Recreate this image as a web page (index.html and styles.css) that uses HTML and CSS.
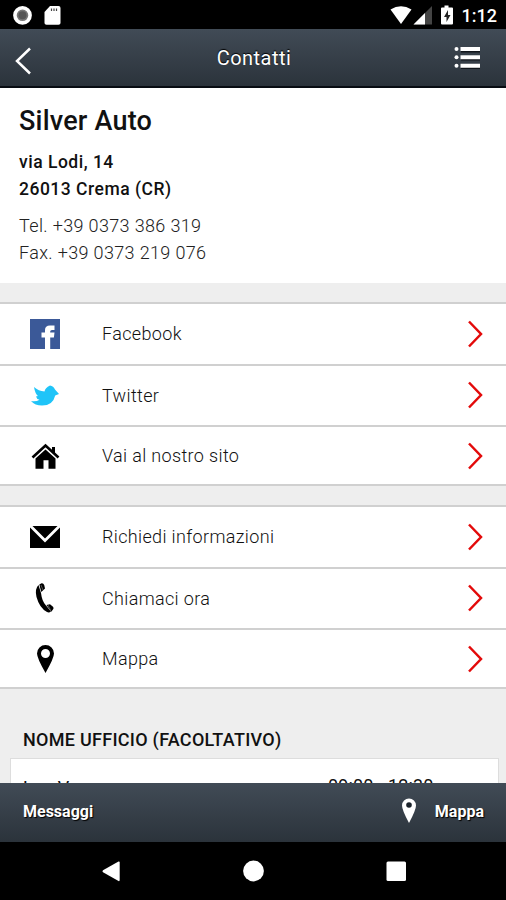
FILE: index.html
```html
<!DOCTYPE html>
<html lang="it">
<head>
  <meta charset="UTF-8">
  <meta name="viewport" content="width=device-width, initial-scale=1.0">
  <title>Contatti</title>
  <link rel="stylesheet" href="styles.css">
</head>
<body>

  <div class="status-bar">
    <svg class="status-left" width="50" height="22" viewBox="0 0 50 22">
      <circle cx="10.500" cy="11.300" r="7.600" fill="#777" stroke="#fff" stroke-width="3.600"/>
      <circle cx="10.500" cy="11.300" r="4" fill="#555"/>
      <path d="M38 2h8.500q2 0 2 2v15q0 1.800-2 1.800h-12q-2 0-2-1.800V8z" fill="#fff"/>
      <path d="M39.500 4.500v2.500M42 4.500v2.500M44.500 4.500v2.500" stroke="#444" stroke-width="1.200"/>
    </svg>
    <div class="status-right">
      <svg width="66" height="22" viewBox="0 0 66 22">
        <path d="M0.500 5.500Q11 -1 21.500 5.500L11 20z" fill="#fff"/>
        <path d="M42 2v18.500H23.500z" fill="#444"/>
        <path d="M35 9v11.500H23.500z" fill="#fff"/>
        <path d="M54.500 1.500h4V3.500h3.500q1 0 1 1V19.500q0 1-1 1H52q-1 0-1-1V4.500q0-1 1-1h2.500z" fill="#fff"/>
        <path d="M58 6l-4 7h2.500v5l4-7H58z" fill="#222"/>
      </svg>
      <span class="time">1:12</span>
    </div>
  </div>

  <div class="header">
    <svg class="back" width="18" height="30" viewBox="0 0 18 30">
      <path d="M15 2.500L2 15l13 12.500" fill="none" stroke="#fff" stroke-width="2.500"/>
    </svg>
    <h1>Contatti</h1>
    <svg class="menu" width="28" height="24" viewBox="0 0 28 24">
      <path d="M7 4h19M7 12h19M7 20.500h19" stroke="#10151b" stroke-width="5"/>
      <path d="M6.500 3h19.500M6.500 11.300h19.500M6.500 19.700h19.500" stroke="#fff" stroke-width="4"/>
      <circle cx="2.500" cy="3" r="2" fill="#fff"/>
      <circle cx="2.500" cy="11.300" r="2" fill="#fff"/>
      <circle cx="2.500" cy="19.700" r="2" fill="#fff"/>
    </svg>
  </div>

  <div class="content">
    <div class="info">
      <h2>Silver Auto</h2>
      <p class="address">via Lodi, 14<br>26013 Crema (CR)</p>
      <p class="phones">Tel. +39 0373 386 319<br>Fax. +39 0373 219 076</p>
    </div>

    <div class="list">
      <div class="row">
        <svg class="icon" width="30" height="30" viewBox="0 0 30 30">
          <rect width="30" height="30" fill="#3b5998"/>
          <path d="M15 30V18.500h-3.500v-5H15V11q0-4.500 5-4.500h4.500v4.500H22q-1.800 0-1.800 1.500v1h4.300l-.6 5h-3.700V30z" fill="#fff"/>
        </svg>
        <span class="label">Facebook</span>
        <svg class="arrow" width="16" height="28" viewBox="0 0 16 28"><path d="M2 1.500L14 14 2 26.500"/></svg>
      </div>
      <div class="row">
        <svg class="icon" width="30" height="30" viewBox="0 0 30 30">
          <path d="M1 21q5 1 8.500-1.200Q6.500 19 6 16.500l2-.5Q5 13.500 4 7q4.500 4 10.500 4.500Q15 8 20 5.500q3.500.5 5 4l4 4.500-3.800 1.500Q23 25.500 12 25.500 5 25.500 1 21z" fill="#1fc4f8"/>
        </svg>
        <span class="label">Twitter</span>
        <svg class="arrow" width="16" height="28" viewBox="0 0 16 28"><path d="M2 1.500L14 14 2 26.500"/></svg>
      </div>
      <div class="row last">
        <svg class="icon" width="30" height="30" viewBox="0 0 30 30">
          <path d="M2.500 16.500L15.500 4.500l13 12" fill="none" stroke="#000" stroke-width="2.600"/>
          <path d="M22 6h3v7l-3-3zM5.500 17.500L15.500 8.500l10 9v10.200H18.500v-8.500h-5v8.500H5.500z" fill="#000"/>
        </svg>
        <span class="label">Vai al nostro sito</span>
        <svg class="arrow" width="16" height="28" viewBox="0 0 16 28"><path d="M2 1.500L14 14 2 26.500"/></svg>
      </div>
    </div>

    <div class="list">
      <div class="row">
        <svg class="icon" width="30" height="30" viewBox="0 0 30 30">
          <path d="M0 4h30v22H0z" fill="#000"/>
          <path d="M0 3.500L15 18.500 30 3.500" fill="none" stroke="#fff" stroke-width="2.800"/>
        </svg>
        <span class="label">Richiedi informazioni</span>
        <svg class="arrow" width="16" height="28" viewBox="0 0 16 28"><path d="M2 1.500L14 14 2 26.500"/></svg>
      </div>
      <div class="row">
        <svg class="icon" width="30" height="30" viewBox="0 0 30 30">
          <path d="M8.500 2Q4.500 6 6.500 14q3 11 10.500 15 2 1 4-.5L16 22.500Q12 18.500 11 10z" fill="#000"/>
          <path d="M9.300 1.500l2.300-1.300q1.800-.3 2.600 1.800l.8 3.500-3.700 3.500zM16.500 22l3.500-.8 3 2.500q1 1.200.3 2.300l-2 2.700z" fill="#000"/>
          <path d="M11 2l2 5M18 22l2.500 5" stroke="#888" stroke-width=".6"/>
        </svg>
        <span class="label">Chiamaci ora</span>
        <svg class="arrow" width="16" height="28" viewBox="0 0 16 28"><path d="M2 1.500L14 14 2 26.500"/></svg>
      </div>
      <div class="row last">
        <svg class="icon" width="30" height="30" viewBox="0 0 30 30">
          <path d="M15.500 1a8.500 8.500 0 0 1 8.500 8.500Q24 14 15.500 29 7 14 7 9.500A8.500 8.500 0 0 1 15.500 1zm0 4a4.500 4.500 0 1 0 0 9 4.500 4.500 0 1 0 0-9z" fill="#000"/>
        </svg>
        <span class="label">Mappa</span>
        <svg class="arrow" width="16" height="28" viewBox="0 0 16 28"><path d="M2 1.500L14 14 2 26.500"/></svg>
      </div>
    </div>

    <h3>NOME UFFICIO (FACOLTATIVO)</h3>
    <div class="hours">
      <span class="days">Lun-Ven</span>
      <span class="slot">09:00 - 12:30</span>
    </div>
  </div>

  <div class="footer">
    <span>Messaggi</span>
    <div class="footer-map">
      <svg width="18" height="28" viewBox="0 0 18 28">
        <path d="M9 1.500a7 7 0 0 1 7 7Q16 13 9 26 2 13 2 8.500a7 7 0 0 1 7-7z" fill="#fff"/>
        <circle cx="9" cy="8" r="2.800" fill="#1b232b"/>
      </svg>
      <span>Mappa</span>
    </div>
  </div>

  <div class="nav-bar">
    <svg width="506" height="58" viewBox="0 0 506 58">
      <path d="M103 28.200L118.500 19.500q1.200-.5 1.200 1v17.500q0 1.500-1.200 1L103 30.200q-1.200-1 0-2z" fill="#fff"/>
      <circle cx="253.500" cy="29" r="10.400" fill="#fff"/>
      <rect x="386.500" y="19.500" width="19.500" height="19.500" rx="1.500" fill="#fff"/>
    </svg>
  </div>

</body>
</html>
```
FILE: styles.css
```css
* {
  box-sizing: border-box;
}

body {
  margin: 0;
  height: 900px;
  display: flex;
  flex-direction: column;
  overflow: hidden;
  background: #000;
  color: #111;
  font-family: Roboto, "Liberation Sans", sans-serif;
}

h1, h2, h3, p {
  margin: 0;
}

svg {
  display: block;
  flex: none;
  overflow: visible;
}

.status-bar {
  height: 29px;
  flex: none;
  display: flex;
  justify-content: space-between;
  padding: 4px 9px 0 12px;
}

.status-right {
  display: flex;
  gap: 6px;
}

.time {
  color: #fff;
  font-size: 18px;
  font-weight: 500;
  line-height: 24px;
}

.header {
  height: 59px;
  flex: none;
  display: flex;
  align-items: center;
  padding: 0 24px 0 15px;
  background: linear-gradient(#414b56, #2b333b);
  border-bottom: 2px solid #080c12;
}

.back {
  margin-top: 6px;
}

.header h1 {
  flex: 1;
  padding-left: 21px;
  text-align: center;
  color: #fff;
  font-size: 20px;
  font-weight: 400;
  letter-spacing: 0.45px;
  text-shadow: 0 -1px 1px #000;
}

.content {
  height: 695px;
  flex: none;
  overflow: hidden;
  background: #eee;
}

.info {
  height: 195px;
  padding: 17px 19px 0;
  background: #fff;
}

.info h2 {
  font-size: 27px;
  font-weight: 500;
  line-height: 32px;
  letter-spacing: 0.2px;
}

.address {
  margin-top: 12px;
  font-size: 17.5px;
  font-weight: 500;
  line-height: 27px;
  letter-spacing: 0.5px;
}

.phones {
  margin-top: 9px;
  color: #222;
  font-size: 18px;
  font-weight: 300;
  line-height: 27px;
  letter-spacing: 0.35px;
}

.list {
  margin-top: 19px;
  border-top: 2px solid #d0d0d0;
}

.row {
  height: 61.5px;
  display: flex;
  align-items: center;
  padding: 0 23px 0 30px;
  background: #fff;
  border-bottom: 2px solid #d0d0d0;
}

.row.last {
  height: 59px;
}

.label {
  flex: 1;
  margin-left: 42px;
  font-size: 18px;
  font-weight: 300;
  letter-spacing: 0.35px;
}

.arrow path {
  fill: none;
  stroke: #e30a0a;
  stroke-width: 2.5;
}

h3 {
  margin: 40px 0 0 23px;
  font-size: 18px;
  font-weight: 500;
  line-height: 22px;
  letter-spacing: 0.28px;
}

.hours {
  display: flex;
  height: 60px;
  margin: 7px 7px 0 10px;
  padding: 15px 12px;
  background: #fff;
  border: 1px solid #ddd;
  font-size: 18px;
  font-weight: 400;
  line-height: 24px;
  letter-spacing: 0.15px;
}

.days {
  width: 305px;
  padding-top: 2px;
}

.footer {
  height: 59px;
  flex: none;
  display: flex;
  align-items: center;
  justify-content: space-between;
  padding: 0 22px 3px 23px;
  background: linear-gradient(#414b56, #2b333b);
  color: #fff;
  font-size: 16px;
  font-weight: 700;
  text-shadow: 1px 1px 1px #000;
}

.footer-map {
  display: flex;
  align-items: center;
  gap: 17px;
}

.nav-bar {
  height: 58px;
  flex: none;
}
```
